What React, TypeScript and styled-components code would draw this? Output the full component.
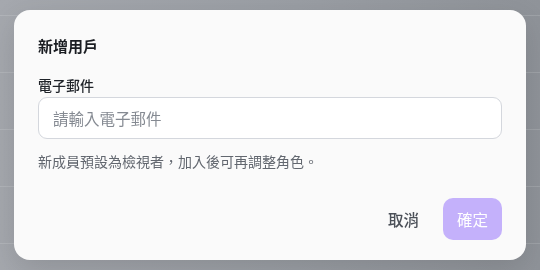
import React from 'react';
import styled, { createGlobalStyle } from 'styled-components';

const GlobalStyle = createGlobalStyle`
  html, body {
    margin: 0;
    padding: 0;
    width: 540px;
    height: 270px;
    overflow: hidden;
  }
  body {
    font-family: Inter, "Noto Sans CJK TC", "Noto Sans", sans-serif;
    -webkit-font-smoothing: antialiased;
  }
`;

const Backdrop = styled.div`
  width: 540px;
  height: 270px;
  overflow: hidden;
  padding-top: 15px;
  box-sizing: border-box;
  background: linear-gradient(90deg, #a5a8ae 0%, #9a9ea4 55%, #8f9399 100%);
`;

const BackdropRow = styled.div`
  height: 57px;
  border-top: 1px solid rgba(255, 255, 255, 0.14);
  box-sizing: border-box;
`;

const Dialog = styled.div`
  position: fixed;
  top: 10px;
  left: 14px;
  width: 512px;
  height: 250px;
  box-sizing: border-box;
  padding: 26px 24px 20px;
  background: #fafafa;
  border-radius: 16px;
  box-shadow: 0 10px 30px rgba(0, 0, 0, 0.12);
  display: flex;
  flex-direction: column;
`;

const Title = styled.h2`
  margin: 0;
  font-size: 15px;
  line-height: 22px;
  font-weight: 700;
  color: #1a1d22;
`;

const Label = styled.label`
  margin-top: 17px;
  font-size: 14px;
  line-height: 21px;
  font-weight: 500;
  color: #1f2329;
`;

const Input = styled.input`
  margin-top: 1px;
  height: 42px;
  box-sizing: border-box;
  padding: 0 14px;
  border: 1px solid #d4d7dd;
  border-radius: 9px;
  background: #ffffff;
  font-family: "Noto Sans CJK TC", sans-serif;
  font-size: 15.5px;
  color: #1f2329;
  outline: none;
  &::placeholder {
    color: #858a92;
  }
`;

const Hint = styled.p`
  margin: 12px 0 0;
  font-family: "Noto Sans CJK TC", sans-serif;
  font-size: 14px;
  line-height: 20px;
  color: #62676f;
`;

const Footer = styled.div`
  margin-top: auto;
  display: flex;
  justify-content: flex-end;
  align-items: center;
  gap: 8px;
`;

const Button = styled.button<{ primary?: boolean }>`
  height: 42px;
  padding: 0 ${(p) => (p.primary ? '14px' : '16px')};
  border: none;
  border-radius: 10px;
  font-family: inherit;
  font-size: 15.5px;
  font-weight: ${(p) => (p.primary ? 400 : 500)};
  cursor: pointer;
  background: ${(p) => (p.primary ? '#c4b1fb' : 'transparent')};
  color: ${(p) => (p.primary ? '#ffffff' : '#4b5058')};
`;

export default function App() {
  return (
    <>
      <GlobalStyle />
      <Backdrop>
        {[0, 1, 2, 3, 4].map((i) => (
          <BackdropRow key={i} />
        ))}
      </Backdrop>
      <Dialog>
        <Title>新增用戶</Title>
        <Label htmlFor="email">電子郵件</Label>
        <Input id="email" placeholder="請輸入電子郵件" />
        <Hint>新成員預設為檢視者，加入後可再調整角色。</Hint>
        <Footer>
          <Button>取消</Button>
          <Button primary disabled>確定</Button>
        </Footer>
      </Dialog>
    </>
  );
}
